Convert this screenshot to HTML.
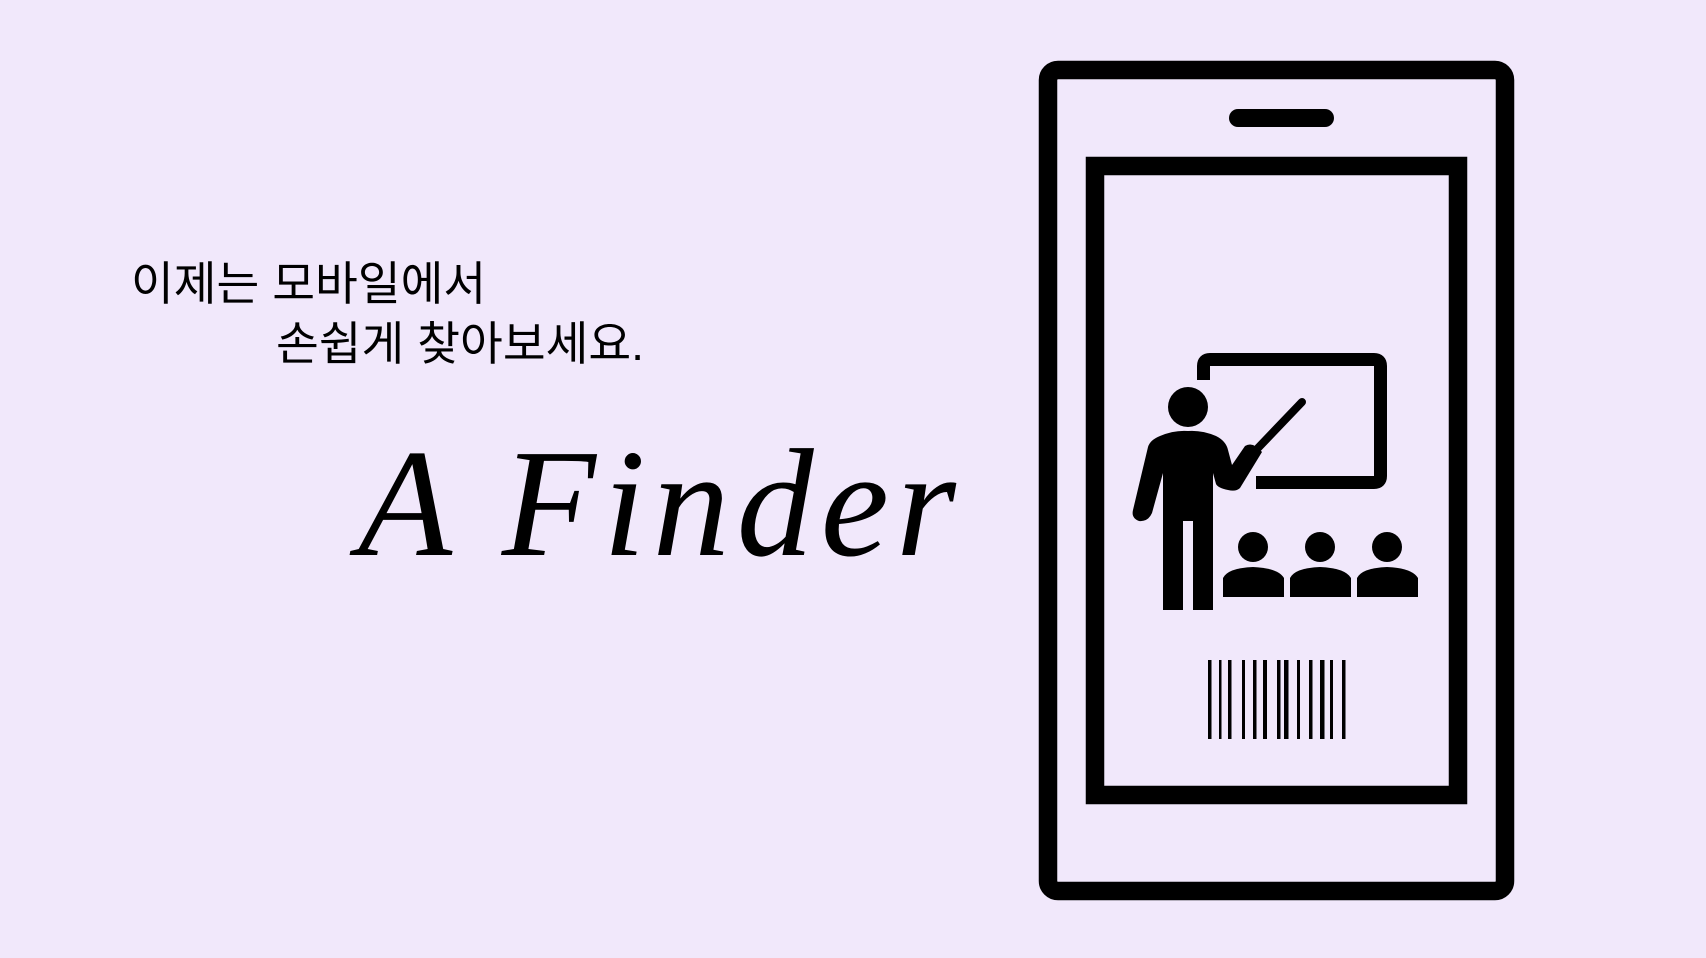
<!DOCTYPE html>
<html><head><meta charset="utf-8"><style>
html,body{margin:0;padding:0}
body{width:1706px;height:958px;background:#f1e8fb;position:relative;overflow:hidden}
.k{position:absolute;font-family:"Liberation Sans","Noto Sans CJK KR",sans-serif;font-size:46.5px;line-height:1;letter-spacing:0px;color:#000;white-space:nowrap}
.f{position:absolute;left:358px;top:427px;font-family:"Liberation Serif",serif;font-style:italic;font-size:154px;line-height:1;letter-spacing:7px;color:#000;white-space:nowrap}
svg{position:absolute;left:0;top:0}
</style></head><body>
<div class="k" style="left:131px;top:261px">이제는 모바일에서</div>
<div class="k" style="left:276px;top:321px">손쉽게 찾아보세요.</div>
<div class="f">A Finder</div>
<svg width="1706" height="958" viewBox="0 0 1706 958">
<rect x="1048" y="70" width="457" height="821" rx="10" fill="none" stroke="#000" stroke-width="18.5"/>
<rect x="1229" y="109" width="105" height="18" rx="9" fill="#000"/>
<rect x="1095" y="166" width="363" height="629" fill="none" stroke="#000" stroke-width="18.5"/>
<path d="M1203.5,380 V366 Q1203.5,359.5 1210,359.5 H1374 Q1380.5,359.5 1380.5,366 V476 Q1380.5,482.5 1374,482.5 H1256" fill="none" stroke="#000" stroke-width="13"/>
<circle cx="1188" cy="407" r="20" fill="#000"/>
<path d="M1148,447 Q1150,440 1160,436 Q1174,430 1188,431 Q1202,430 1216,436 Q1226,441 1228,450 L1232,465 L1245,446 Q1253,441 1262,452 L1240,488 Q1236,492 1228,490 Q1218,488 1216,484 L1213,473 V610 H1193 V521 H1183 V610 H1163 V473 L1152,513 Q1148,522 1139,521 Q1131,518 1133,510 Z" fill="#000"/>
<line x1="1258" y1="448" x2="1302" y2="402" stroke="#000" stroke-width="8" stroke-linecap="round"/>
<g fill="#000">
<circle cx="1253" cy="547" r="15"/><circle cx="1320" cy="547" r="15"/><circle cx="1387" cy="547" r="15"/>
<path d="M1223,597 V578 Q1228,568 1253,567 Q1278,568 1284,578 V597 Z"/>
<path d="M1290,597 V578 Q1295,568 1320,567 Q1345,568 1351,578 V597 Z"/>
<path d="M1357,597 V578 Q1362,568 1387,567 Q1412,568 1418,578 V597 Z"/>
<rect x="1208" y="660" width="3.5" height="79"/><rect x="1219" y="660" width="2.5" height="79"/>
<rect x="1228" y="660" width="3.5" height="79"/><rect x="1242" y="660" width="3" height="79"/>
<rect x="1253" y="660" width="3.5" height="79"/><rect x="1263" y="660" width="4" height="79"/>
<rect x="1277" y="660" width="3.5" height="79"/><rect x="1284" y="660" width="4.5" height="79"/>
<rect x="1297" y="660" width="3" height="79"/><rect x="1309" y="660" width="3.5" height="79"/>
<rect x="1320" y="660" width="4.5" height="79"/><rect x="1330" y="660" width="3" height="79"/>
<rect x="1342" y="660" width="3.5" height="79"/>
</g>
</svg>
</body></html>
